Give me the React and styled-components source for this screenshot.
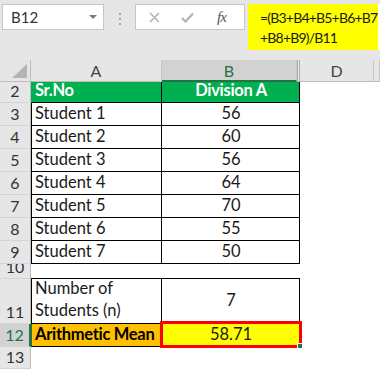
import React from "react";
import styled, { createGlobalStyle } from "styled-components";

const GlobalStyle = createGlobalStyle`
  html, body {
    margin: 0;
    padding: 0;
    background: #ffffff;
    overflow: hidden;
  }
  body {
    font-family: Lato, "Liberation Sans", sans-serif;
  }
`;

const Page = styled.div`
  width: 380px;
  height: 369px;
  overflow: hidden;
  background: #ffffff;
`;

/* ---------- formula toolbar ---------- */

const Toolbar = styled.div`
  display: flex;
  align-items: flex-start;
  height: 60px;
  box-sizing: border-box;
  padding: 4px 0 0 2px;
  background: #e6e6e6;
`;

const NameBox = styled.div`
  display: flex;
  align-items: center;
  justify-content: space-between;
  width: 102px;
  height: 26px;
  box-sizing: border-box;
  padding: 0 6px 0 8px;
  background: #ffffff;
  border: 1px solid #c6c6c6;
  font-size: 15px;
  color: #333333;
`;

const DropArrow = styled.span`
  width: 0;
  height: 0;
  border-left: 4px solid transparent;
  border-right: 4px solid transparent;
  border-top: 4px solid #7a7a7a;
`;

const Grip = styled.div`
  display: flex;
  flex-direction: column;
  gap: 3px;
  margin: 9px 14px 0 15px;
  span {
    width: 2px;
    height: 2px;
    background: #a6a6a6;
  }
`;

const ButtonBox = styled.div`
  display: flex;
  align-items: center;
  width: 110px;
  height: 26px;
  box-sizing: border-box;
  padding-left: 13px;
  gap: 21px;
  background: #ffffff;
  border: 1px solid #c6c6c6;
`;

const Fx = styled.span`
  font-family: "Liberation Serif", serif;
  font-style: italic;
  font-size: 15px;
  color: #555555;
  margin-left: 2px;
  letter-spacing: -1px;
`;

const FormulaArea = styled.div`
  flex: 1;
  display: flex;
  margin-left: 3px;
  background: #ffffff;
`;

const FormulaText = styled.div`
  width: 130px;
  height: 46px;
  box-sizing: border-box;
  padding: 4px 0 0 12px;
  background: #ffff00;
  font-size: 14px;
  letter-spacing: -0.8px;
  line-height: 20px;
  color: #1a1a1a;
  white-space: nowrap;
  overflow: hidden;
`;

/* ---------- sheet ---------- */

const HeaderRow = styled.div`
  display: flex;
  height: 22px;
  background: #e6e6e6;
  box-sizing: border-box;
`;

const Corner = styled.div`
  position: relative;
  width: 31px;
  flex: none;
  box-sizing: border-box;
  border-right: 1px solid #bdbdbd;
  border-bottom: 1px solid #bdbdbd;
  svg {
    position: absolute;
    left: 12px;
    top: 4px;
  }
`;

const ColHead = styled.div`
  display: flex;
  align-items: center;
  justify-content: center;
  flex: ${(p) => (p.$grow ? 1 : "none")};
  width: ${(p) => (p.$w ? `${p.$w}px` : "auto")};
  box-sizing: border-box;
  font-size: 16px;
  color: ${(p) => (p.$active ? "#217346" : "#444444")};
  background: ${(p) => (p.$active ? "#d2d2d2" : "#e6e6e6")};
  border-right: 1px solid #c6c6c6;
  border-bottom: ${(p) => (p.$active ? "2px solid #217346" : "1px solid #bdbdbd")};
  padding-top: ${(p) => (p.$active ? "1px" : "0")};
`;

const HiddenCol = styled.div`
  width: 3px;
  flex: none;
  box-sizing: border-box;
  border-left: 1px solid #b0b0b0;
  border-right: 1px solid #b0b0b0;
  border-bottom: 1px solid #bdbdbd;
  background: #e6e6e6;
`;

const Row = styled.div`
  display: flex;
  height: ${(p) => p.$h}px;
  font-size: 16.5px;
`;

const RowNum = styled.div`
  display: flex;
  align-items: flex-end;
  justify-content: center;
  width: 31px;
  flex: none;
  box-sizing: border-box;
  overflow: hidden;
  padding-bottom: 2px;
  line-height: 18px;
  background: ${(p) => (p.$active ? "#d2d2d2" : "#e6e6e6")};
  color: ${(p) => (p.$active ? "#217346" : "#333333")};
  border-right: ${(p) => (p.$active ? "2px solid #217346" : "1px solid #bdbdbd")};
  border-bottom: 1px solid #d4d4d4;
  font-size: 16px;
`;

const Cell = styled.div`
  position: relative;
  display: flex;
  align-items: ${(p) => (p.$middle ? "center" : "flex-end")};
  justify-content: ${(p) => (p.$center ? "center" : "flex-start")};
  width: ${(p) => p.$w}px;
  flex: none;
  box-sizing: border-box;
  padding: 0 2px 2px 3px;
  line-height: ${(p) => (p.$wrap ? "22px" : "20px")};
  white-space: ${(p) => (p.$wrap ? "normal" : "nowrap")};
  font-weight: ${(p) => (p.$bold ? 700 : 400)};
  letter-spacing: ${(p) => (p.$bold ? "-0.3px" : "0")};
  color: ${(p) => p.$color || "#1a1a1a"};
  background: ${(p) => p.$bg || "#ffffff"};
  border-left: ${(p) => (p.$left ? `1px solid ${p.$left}` : "none")};
  border-right: ${(p) => (p.$right ? "1px solid #000000" : "none")};
  border-bottom: ${(p) => (p.$bottom ? "1px solid #000000" : "none")};
`;

const Rest = styled.div`
  flex: 1;
  background: #ffffff;
`;

const Selection = styled.div`
  position: absolute;
  left: -2px;
  right: -3px;
  top: -3px;
  bottom: -2px;
  border: 3px solid #ff0000;
  pointer-events: none;
`;

const FillHandle = styled.div`
  position: absolute;
  right: -4px;
  bottom: -3px;
  width: 4px;
  height: 4px;
  background: #217346;
  border: 1px solid #ffffff;
`;

const students = [
  ["Student 1", 56],
  ["Student 2", 60],
  ["Student 3", 56],
  ["Student 4", 64],
  ["Student 5", 70],
  ["Student 6", 55],
  ["Student 7", 50],
];

function App() {
  return (
    <>
      <GlobalStyle />
      <Page>
        <Toolbar>
          <NameBox>
            B12
            <DropArrow />
          </NameBox>
          <Grip>
            <span />
            <span />
            <span />
          </Grip>
          <ButtonBox>
            <svg width="11" height="11" viewBox="0 0 11 11">
              <path d="M1 1 L10 10 M10 1 L1 10" stroke="#b4b4b4" strokeWidth="1.6" fill="none" />
            </svg>
            <svg width="13" height="11" viewBox="0 0 13 11">
              <path d="M1 6 L4.5 9.5 L12 1.5" stroke="#b4b4b4" strokeWidth="2.2" fill="none" />
            </svg>
            <Fx>fx</Fx>
          </ButtonBox>
          <FormulaArea>
            <FormulaText>
              =(B3+B4+B5+B6+B7
              <br />
              +B8+B9)/B11
            </FormulaText>
          </FormulaArea>
        </Toolbar>

        <HeaderRow>
          <Corner>
            <svg width="15" height="14" viewBox="0 0 15 14">
              <polygon points="15,0 15,14 0,14" fill="#b4b4b4" />
            </svg>
          </Corner>
          <ColHead $w={131}>A</ColHead>
          <ColHead $w={135} $active>
            B
          </ColHead>
          <HiddenCol />
          <ColHead $w={74}>D</ColHead>
          <ColHead $grow />
        </HeaderRow>

        <Row $h={21}>
          <RowNum>2</RowNum>
          <Cell $w={131} $bg="#00b050" $color="#ffffff" $bold $right $bottom $left="#00b050">
            Sr.No
          </Cell>
          <Cell $w={138} $bg="#00b050" $color="#ffffff" $bold $center $right $bottom>
            Division A
          </Cell>
          <Rest />
        </Row>

        {students.map(([name, score], i) => (
          <Row $h={23} key={name}>
            <RowNum>{i + 3}</RowNum>
            <Cell $w={131} $left="#000000" $right $bottom>
              {name}
            </Cell>
            <Cell $w={138} $center $right $bottom>
              {score}
            </Cell>
            <Rest />
          </Row>
        ))}

        <Row $h={15}>
          <RowNum>10</RowNum>
          <Cell $w={131} $bottom />
          <Cell $w={138} $bottom />
          <Rest />
        </Row>

        <Row $h={45}>
          <RowNum>11</RowNum>
          <Cell $w={131} $left="#000000" $right $bottom $wrap>
            Number of Students (n)
          </Cell>
          <Cell $w={138} $center $middle $right $bottom>
            7
          </Cell>
          <Rest />
        </Row>

        <Row $h={23}>
          <RowNum $active>12</RowNum>
          <Cell $w={131} $bg="#ffc000" $color="#000000" $bold $left="#217346" $right $bottom>
            Arithmetic Mean
          </Cell>
          <Cell $w={138} $bg="#ffff00" $center $right $bottom>
            58.71
            <Selection />
            <FillHandle />
          </Cell>
          <Rest />
        </Row>

        <Row $h={22}>
          <RowNum>13</RowNum>
          <Rest />
        </Row>
      </Page>
    </>
  );
}

export default App;
